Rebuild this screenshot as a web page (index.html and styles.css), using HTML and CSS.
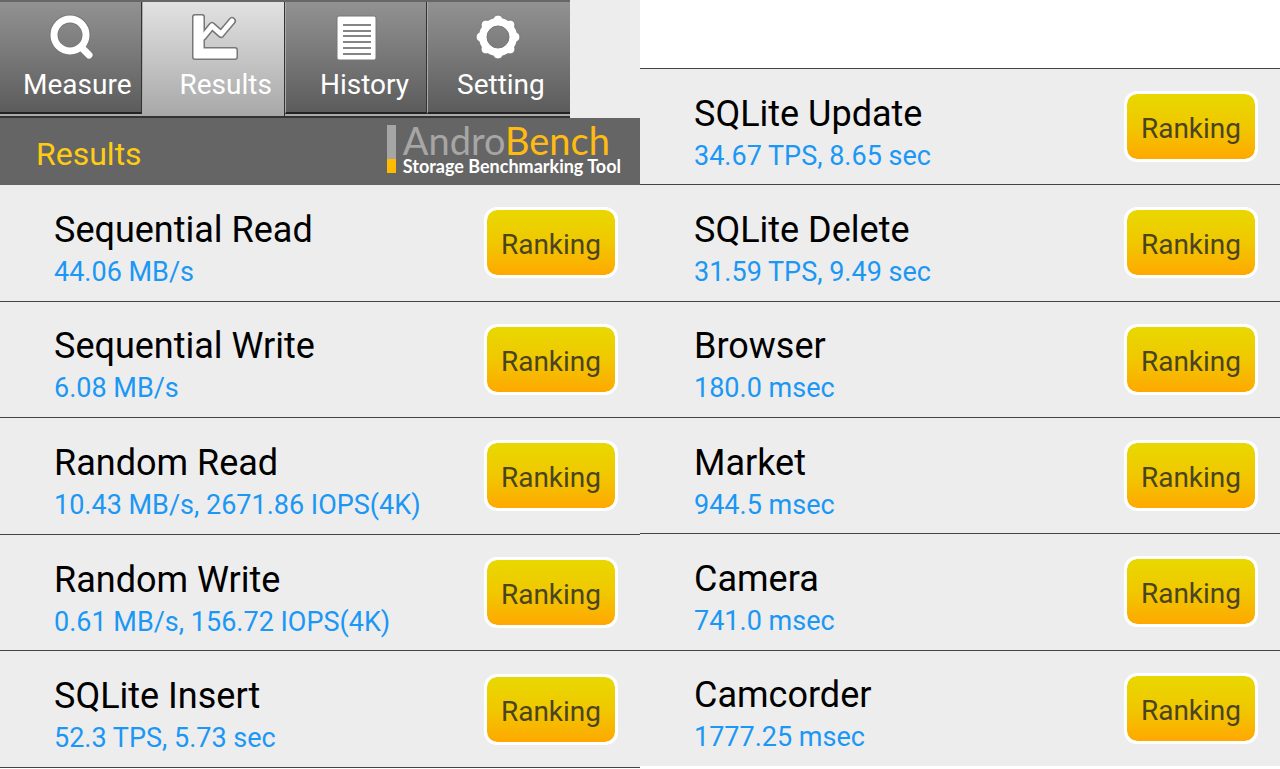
FILE: index.html
```
<!DOCTYPE html>
<html lang="en">
<head>
  <meta charset="UTF-8">
  <meta name="viewport" content="width=device-width, initial-scale=1">
  <title>AndroBench - Results</title>
  <link rel="stylesheet" href="styles.css">
</head>
<body>

<main class="screens">
  <section class="screen">
    <nav class="tabs">
      <div class="tab-strip" aria-hidden="true">
        <div class="cell">
          <svg width="50" height="50" viewBox="0 0 50 50">
            <g fill="none" stroke-linecap="round">
              <path d="M36 35l7 7" stroke="#777" stroke-width="8"/>
              <circle cx="24" cy="22" r="16" stroke="#777" stroke-width="9"/>
              <path d="M36 35l7 7" stroke="#fff" stroke-width="7"/>
              <circle cx="24" cy="22" r="16" stroke="#fff" stroke-width="7"/>
            </g>
          </svg>
        </div>
        <div class="cell active">
          <svg width="50" height="50" viewBox="0 0 50 50">
            <g stroke-linecap="round" stroke-linejoin="round">
              <path d="M6 4h7v33h33v7H6z" fill="none" stroke="#777" stroke-width="6"/>
              <path d="M14 24l9-11 9 8 11-13" fill="none" stroke="#777" stroke-width="8"/>
              <path d="M14 24l9-11 9 8 11-13" fill="none" stroke="#fff" stroke-width="5"/>
              <path d="M6 4h7v33h33v7H6z" fill="#fff" stroke="#fff" stroke-width="3"/>
            </g>
          </svg>
        </div>
        <div class="cell">
          <svg width="50" height="50" viewBox="0 0 50 50">
            <rect x="6" y="3" width="39" height="44" rx="2" fill="#fff" stroke="#777"/>
            <path d="M12 12h28M12 18h28M12 23h28M12 29h28M12 35h28M12 41h28" stroke="#858585" stroke-width="2"/>
          </svg>
        </div>
        <div class="cell">
          <svg width="50" height="50" viewBox="0 0 50 50">
            <g fill="#fff" stroke="#777">
              <circle cx="24" cy="7" r="5"/><circle cx="24" cy="41" r="5"/>
              <circle cx="7" cy="24" r="5"/><circle cx="41" cy="24" r="5"/>
              <circle cx="12" cy="12" r="5"/><circle cx="36" cy="12" r="5"/>
              <circle cx="12" cy="36" r="5"/><circle cx="36" cy="36" r="5"/>
            </g>
            <circle cx="24" cy="24" r="15" fill="none" stroke="#fff" stroke-width="8"/>
            <circle cx="24" cy="24" r="11" fill="none" stroke="#777"/>
          </svg>
        </div>
      </div>
      <div class="tab-labels">
        <button type="button">Measure</button>
        <button type="button" aria-current="page">Results</button>
        <button type="button">History</button>
        <button type="button">Setting</button>
      </div>
    </nav>

    <header class="title-bar">
      <h1>Results</h1>
      <div class="logo">
        <span class="logo-mark"></span>
        <div>
          <div class="logo-name">Andro<b>Bench</b></div>
          <div class="logo-tag">Storage Benchmarking Tool</div>
        </div>
      </div>
    </header>

    <ul class="results">
      <li>
        <div><h2>Sequential Read</h2><p>44.06 MB/s</p></div>
        <button type="button" class="ranking">Ranking</button>
      </li>
      <li>
        <div><h2>Sequential Write</h2><p>6.08 MB/s</p></div>
        <button type="button" class="ranking">Ranking</button>
      </li>
      <li>
        <div><h2>Random Read</h2><p>10.43 MB/s, 2671.86 IOPS(4K)</p></div>
        <button type="button" class="ranking">Ranking</button>
      </li>
      <li>
        <div><h2>Random Write</h2><p>0.61 MB/s, 156.72 IOPS(4K)</p></div>
        <button type="button" class="ranking">Ranking</button>
      </li>
      <li>
        <div><h2>SQLite Insert</h2><p>52.3 TPS, 5.73 sec</p></div>
        <button type="button" class="ranking">Ranking</button>
      </li>
    </ul>
  </section>

  <section class="screen continued">
    <ul class="results">
      <li>
        <div><h2>SQLite Update</h2><p>34.67 TPS, 8.65 sec</p></div>
        <button type="button" class="ranking">Ranking</button>
      </li>
      <li>
        <div><h2>SQLite Delete</h2><p>31.59 TPS, 9.49 sec</p></div>
        <button type="button" class="ranking">Ranking</button>
      </li>
      <li>
        <div><h2>Browser</h2><p>180.0 msec</p></div>
        <button type="button" class="ranking">Ranking</button>
      </li>
      <li>
        <div><h2>Market</h2><p>944.5 msec</p></div>
        <button type="button" class="ranking">Ranking</button>
      </li>
      <li>
        <div><h2>Camera</h2><p>741.0 msec</p></div>
        <button type="button" class="ranking">Ranking</button>
      </li>
      <li>
        <div><h2>Camcorder</h2><p>1777.25 msec</p></div>
        <button type="button" class="ranking">Ranking</button>
      </li>
    </ul>
  </section>
</main>

</body>
</html>
```
FILE: styles.css
```
* {
  box-sizing: border-box;
}
body {
  margin: 0;
  background: #fff;
  color: #000;
  font-family: Roboto, "Liberation Sans", sans-serif;
}
h1, h2, p, ul {
  margin: 0;
  padding: 0;
  font-weight: normal;
}
button {
  font: inherit;
  cursor: pointer;
}
.screens {
  display: grid;
  grid-template-columns: 1fr 1fr;
  min-height: 100vh;
}
.screen {
  display: flex;
  flex-direction: column;
  padding-bottom: 1px;
}
.continued {
  padding: 68px 0 3px;
}

/* tabs: the labels run over the icon strip with their own spacing */
.tabs {
  display: grid;
  height: 118px;
  background: #ededed;
}
.tab-strip, .tab-labels {
  grid-area: 1 / 1;
}
.tab-strip {
  display: grid;
  grid-template-columns: repeat(4, 1fr);
  width: 89%;
  border-top: 2px solid #666;
  border-bottom: 2px solid #333;
  background: #aaa;
}
.cell {
  margin-bottom: 2px;
  padding-top: 11px;
  text-align: center;
  border-left: 1px solid #aaa;
  border-right: 1px solid #333;
  border-bottom: 2px solid #222;
  background: linear-gradient(#929292, #5c5c5c);
}
.cell:first-child {
  border-left: 0;
}
.cell:last-child {
  border-right: 0;
}
.cell.active {
  margin-bottom: 0;
  border-bottom: 0;
  background: linear-gradient(#e2e2e2, #a8a8a8);
}
.tab-labels {
  display: flex;
  gap: 2px;
}
.tab-labels button {
  padding: 50px 23px 0;
  border: 0;
  background: none;
  color: #fff;
  font-size: 28px;
}

.title-bar {
  display: flex;
  justify-content: space-between;
  align-items: center;
  height: 67px;
  padding: 0 19px 0 36px;
  background: #656565;
}
h1 {
  padding-top: 4px;
  color: #fc1;
  font-size: 32px;
  line-height: 40px;
}
.logo {
  display: flex;
  gap: 7px;
  padding-bottom: 2px;
}
.logo-mark {
  width: 9px;
  height: 48px;
  background: linear-gradient(#a6a6a6 70%, #fb0 70%);
}
.logo-name {
  color: #a6a6a6;
  font-family: Lato, sans-serif;
  font-size: 38px;
  line-height: 30px;
}
.logo-name b {
  color: #fb1;
  font-weight: normal;
}
.logo-tag {
  color: #fff;
  font-family: Lato, sans-serif;
  font-size: 18px;
  font-weight: bold;
  line-height: 22px;
}

.results {
  display: flex;
  flex: 1;
  flex-direction: column;
  list-style: none;
  background: #ededed;
}
.results li {
  display: flex;
  flex: 1;
  justify-content: space-between;
  align-items: center;
  padding: 0 22px 0 54px;
  border-bottom: 1px solid #444;
}
.continued li {
  border-top: 1px solid #444;
  border-bottom: 0;
}
.results li > div {
  padding-top: 14px;
}
h2 {
  font-size: 36px;
  line-height: 44px;
}
.results p {
  color: #1b97f5;
  font-size: 27px;
  line-height: 40px;
}
.ranking {
  width: 134px;
  height: 71px;
  padding: 4px 0 0;
  border: 3px solid #fff;
  border-radius: 13px;
  background: linear-gradient(#e8d800, #f0c800 50%, #ffa800) padding-box;
  color: #4a4420;
  font-size: 28px;
}
```
